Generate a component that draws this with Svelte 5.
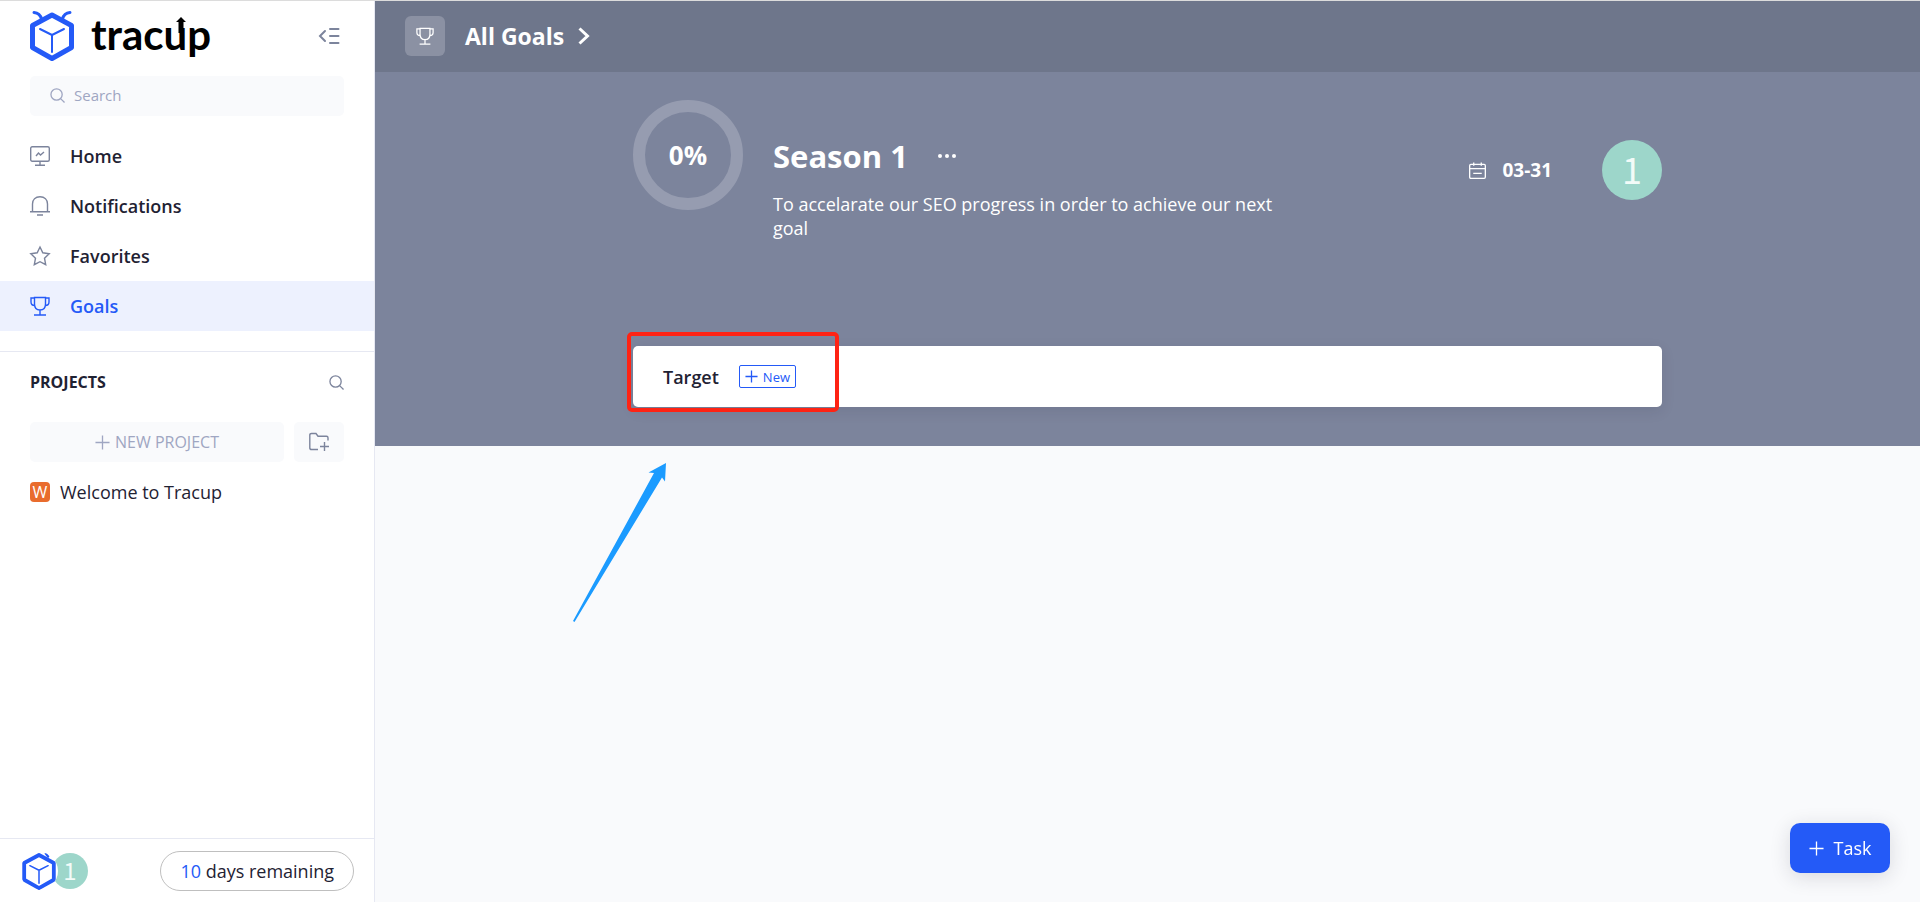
<script lang="ts">
	let keyword = '';

	const navItems = [
		{ id: 'home', label: 'Home' },
		{ id: 'notifications', label: 'Notifications' },
		{ id: 'favorites', label: 'Favorites' },
		{ id: 'goals', label: 'Goals' }
	];
	const activeItem = 'goals';

	const projects = [{ name: 'Welcome to Tracup', initial: 'W' }];

	const goal = {
		name: 'Season 1',
		progress: 0,
		description: 'To accelarate our SEO progress in order to achieve our next goal',
		due: '03-31'
	};
	const daysLeft = 10;
	const circumference = 2 * Math.PI * 49;
</script>

{#snippet cube()}
	<path class="shell" d="M22 4 L41.500 14.500 V36.500 L22 47.500 L2.500 36.500 V14.500 Z" />
	<path class="edge" d="M10 18 L22 24 L34 18 M22 24 V41" />
{/snippet}

{#snippet trophy()}
	<path d="M4.500 1.500 H15.500 V8 C15.500 12 13 14 10 14 C7 14 4.500 12 4.500 8 Z M4.500 2 H1 V6 C1 8.500 2.500 9.500 4.800 9.500 M15.500 2 H19 V6 C19 8.500 17.500 9.500 15.200 9.500 M10 14 V18.500 M4 19 H16" />
{/snippet}

{#snippet magnifier()}
	<svg class="icon small" viewBox="0 0 16 16" aria-hidden="true">
		<circle cx="7" cy="7" r="6" />
		<path d="M11.300 11.300 L15.500 15.500" />
	</svg>
{/snippet}

<div class="app">
	<aside class="sidebar">
		<div class="brand">
			<a class="logo" href="#home" aria-label="tracup">
				<svg class="cube" viewBox="0 0 44 50" aria-hidden="true">
					{@render cube()}
					<path class="antenna" d="M4 1.500 Q10 2 11.500 8 M40 1.500 Q34 2 32.500 8" />
				</svg>
				<span class="wordmark">
					tracup
					<svg class="up" viewBox="0 0 10 16" aria-hidden="true">
						<path d="M5 0 L10 5 H7.500 V16 H2.500 V5 H0 Z" />
					</svg>
				</span>
			</a>
			<button class="plain" aria-label="Collapse sidebar">
				<svg class="icon collapse" viewBox="0 0 20 16" aria-hidden="true">
					<path d="M6 3 L1 8 L6 13 M11 1 H19.500 M11 8 H19.500 M11 15 H19.500" />
				</svg>
			</button>
		</div>

		<label class="search">
			{@render magnifier()}
			<input type="text" placeholder="Search" aria-label="Search" bind:value={keyword} />
		</label>

		<nav>
			{#each navItems as item}
				<a href="#{item.id}" class:active={item.id === activeItem}>
					<svg class="icon" viewBox="0 0 20 20" aria-hidden="true">
						{#if item.id === 'home'}
							<rect x="0.700" y="0.700" width="18.600" height="14.600" rx="1.500" />
							<path d="M10 15.500 V19 M5 19.200 H15 M6 10 L8.500 7 L10.500 9 L14 6" />
						{:else if item.id === 'notifications'}
							<path d="M2.500 15.500 V8 C2.500 3.500 5.500 0.700 10 0.700 C14.500 0.700 17.500 3.500 17.500 8 V15.500 M0 15.800 H20 M7 19 H13" />
						{:else if item.id === 'favorites'}
							<path d="M10 1 L12.800 6.800 L19.200 7.700 L14.500 12.200 L15.700 18.700 L10 15.700 L4.300 18.700 L5.500 12.200 L0.800 7.700 L7.200 6.800 Z" />
						{:else}
							{@render trophy()}
						{/if}
					</svg>
					<span>{item.label}</span>
				</a>
			{/each}
		</nav>

		<section class="projects">
			<div class="projects-head">
				<h2>PROJECTS</h2>
				<button class="plain" aria-label="Search projects">{@render magnifier()}</button>
			</div>
			<div class="project-actions">
				<button class="new-project">
					<svg class="icon small" viewBox="0 0 16 16" aria-hidden="true">
						<path d="M8 0.500 V15.500 M0.500 8 H15.500" />
					</svg>
					NEW PROJECT
				</button>
				<button class="new-folder" aria-label="New folder">
					<svg class="icon" viewBox="0 0 20 20" aria-hidden="true">
						<path d="M9 17.500 H2.500 Q0.800 17.500 0.800 16 V3 Q0.800 1.500 2.500 1.500 H7 L9 4.200 H17.500 Q19 4.200 19 5.700 V8.500 M15.500 10 V19 M11 14.500 H20" />
					</svg>
				</button>
			</div>
			{#each projects as project}
				<a class="project" href="#project">
					<span class="badge" aria-hidden="true">{project.initial}</span>
					{project.name}
				</a>
			{/each}
		</section>

		<footer>
			<div class="members">
				<svg class="member-cube" viewBox="0 0 44 50" aria-hidden="true">
					{@render cube()}
					<path class="antenna" d="M31 2 L34 6" />
				</svg>
				<span class="avatar mini">1</span>
			</div>
			<button class="remaining"><span>{daysLeft}</span> days remaining</button>
		</footer>
	</aside>

	<main>
		<header>
			<span class="tile">
				<svg class="icon tile-icon" viewBox="0 0 20 20" aria-hidden="true">{@render trophy()}</svg>
			</span>
			<a href="#goals">
				All Goals
				<svg class="icon chevron" viewBox="0 0 12 18" aria-hidden="true">
					<path d="M1.500 1.500 L9.500 9 L1.500 16.500" />
				</svg>
			</a>
		</header>

		<section class="hero">
			<div class="content">
				<div class="summary">
					<div class="ring">
						<svg viewBox="0 0 110 110" aria-hidden="true">
							<circle class="track" cx="55" cy="55" r="49" />
							{#if goal.progress > 0}
								<circle class="done" cx="55" cy="55" r="49" stroke-dasharray="{(circumference * goal.progress) / 100} {circumference}" />
							{/if}
						</svg>
						<span>{goal.progress}%</span>
					</div>

					<div class="info">
						<div class="title">
							<h1>{goal.name}</h1>
							<button class="plain" aria-label="More">
								<svg class="dots" viewBox="0 0 18 4" aria-hidden="true">
									<circle cx="2" cy="2" r="2" />
									<circle cx="9" cy="2" r="2" />
									<circle cx="16" cy="2" r="2" />
								</svg>
							</button>
						</div>
						<p>{goal.description}</p>
					</div>

					<div class="meta">
						<span class="due">
							<svg class="icon calendar" viewBox="0 0 18 18" aria-hidden="true">
								<path d="M2 2.500 H16 Q17.300 2.500 17.300 4 V16 Q17.300 17.300 16 17.300 H2 Q0.700 17.300 0.700 16 V4 Q0.700 2.500 2 2.500 Z M0.700 7 H17.300 M5 0.500 V4 M13 0.500 V4 M4.500 12 H13.500" />
							</svg>
							{goal.due}
						</span>
						<span class="avatar">1</span>
					</div>
				</div>

				<div class="target">
					<h3>Target</h3>
					<button class="new-target">
						<svg class="icon" viewBox="0 0 14 14" aria-hidden="true">
							<path d="M7 0.500 V13.500 M0.500 7 H13.500" />
						</svg>
						New
					</button>
					<div class="marker"></div>
					<svg class="pointer" viewBox="0 0 94 160" aria-hidden="true">
						<path d="M93 0 L92 18.500 L89 14.500 L1.500 159 L0 158 L81 10 L75.500 9.500 Z" />
					</svg>
				</div>
			</div>
		</section>

		<button class="task">
			<svg class="icon small" viewBox="0 0 16 16" aria-hidden="true">
				<path d="M8 0.500 V15.500 M0.500 8 H15.500" />
			</svg>
			Task
		</button>
	</main>
</div>

<style>
	:global(body) {
		background: #f9fafc;
		color: #1f2233;
		font-family: "Open Sans", "Noto Sans", sans-serif;
		font-size: 18px;
		line-height: 24px;
	}

	.app,
	.app :global(*) {
		box-sizing: border-box;
	}

	.app {
		display: grid;
		grid-template-columns: 375px 1fr;
		min-height: 100vh;
		border-top: 1px solid #dcdcdc;
	}

	a {
		color: inherit;
		text-decoration: none;
	}

	button {
		border: none;
		padding: 0;
		background: none;
		color: inherit;
		font: inherit;
		cursor: pointer;
	}

	h1,
	h2,
	h3,
	p {
		margin: 0;
	}

	.plain {
		display: flex;
		align-items: center;
	}

	.icon {
		width: 20px;
		height: 20px;
		flex-shrink: 0;
		overflow: visible;
		fill: none;
		stroke: currentColor;
		stroke-width: 1.4;
	}

	.icon.small {
		width: 15px;
		height: 15px;
	}

	/* Sidebar */
	.sidebar {
		display: flex;
		flex-direction: column;
		background: #fff;
		border-right: 1px solid #e6e8f2;
	}

	.brand {
		display: flex;
		align-items: center;
		justify-content: space-between;
		height: 75px;
		padding: 0 35px 6px 30px;
		color: #7c849c;
	}

	.logo {
		display: flex;
		align-items: center;
		gap: 17px;
	}

	.cube {
		width: 44px;
		height: 50px;
	}

	.shell,
	.edge,
	.antenna {
		fill: none;
		stroke: #245af7;
		stroke-linecap: round;
		stroke-linejoin: round;
	}

	.shell {
		stroke-width: 5;
	}

	.edge {
		stroke-width: 2;
	}

	.antenna {
		stroke-width: 3;
	}

	.wordmark {
		position: relative;
		padding-bottom: 4px;
		color: #000;
		font-family: Lato, sans-serif;
		font-size: 42px;
		font-weight: 700;
		line-height: 48px;
	}

	.up {
		position: absolute;
		top: 7px;
		right: 25px;
		width: 10px;
		height: 16px;
	}

	.collapse {
		height: 16px;
		stroke-width: 2;
		stroke-linecap: round;
	}

	.search {
		display: flex;
		align-items: center;
		gap: 9px;
		height: 40px;
		margin: 0 30px 15px;
		padding: 0 20px 2px;
		border-radius: 5px;
		background: #f9fafc;
		color: #9fa6c2;
	}

	.search input {
		flex: 1;
		min-width: 0;
		padding: 0;
		border: none;
		outline: none;
		background: none;
		color: #1f2233;
		font: inherit;
		font-size: 15px;
	}

	.search input::placeholder {
		color: #9fa6c2;
		opacity: 1;
	}

	nav {
		padding-bottom: 20px;
		border-bottom: 1px solid #e6e8f2;
	}

	nav a {
		display: flex;
		align-items: center;
		gap: 20px;
		height: 50px;
		padding: 0 30px;
		font-weight: 600;
	}

	nav .icon {
		color: #7c849c;
	}

	nav a.active,
	nav a.active .icon {
		color: #245af7;
	}

	nav a.active {
		background: #edf1fe;
	}

	.projects {
		flex: 1;
		padding: 0 30px;
	}

	.projects-head {
		display: flex;
		align-items: center;
		justify-content: space-between;
		height: 60px;
	}

	.projects-head h2 {
		font-size: 16px;
		font-weight: 700;
	}

	.projects-head .plain {
		color: #7c849c;
	}

	.project-actions {
		display: flex;
		gap: 10px;
		height: 40px;
		margin: 10px 0;
	}

	.new-project,
	.new-folder {
		display: flex;
		align-items: center;
		justify-content: center;
		gap: 5px;
		border-radius: 5px;
		background: #f9fafc;
	}

	.new-project {
		flex: 1;
		color: #9fa6c2;
		font-size: 16px;
	}

	.new-folder {
		width: 50px;
		color: #7c849c;
	}

	.project {
		display: flex;
		align-items: center;
		gap: 10px;
		height: 40px;
	}

	.badge {
		width: 20px;
		height: 20px;
		border-radius: 4px;
		background: #e96c2d;
		color: #fff;
		font-size: 16px;
		line-height: 20px;
		text-align: center;
	}

	footer {
		display: flex;
		align-items: center;
		justify-content: space-between;
		height: 64px;
		padding: 0 20px;
		border-top: 1px solid #e6e8f2;
	}

	.members {
		display: flex;
		align-items: center;
	}

	.member-cube {
		z-index: 1;
		width: 38px;
		height: 38px;
		border-radius: 50%;
		background: #fff;
	}

	.avatar {
		width: 60px;
		height: 60px;
		border-radius: 50%;
		background: #9dd6ca;
		color: #f2fbf8;
		font-family: "Noto Sans CJK SC", sans-serif;
		font-size: 36px;
		line-height: 56px;
		text-align: center;
	}

	.avatar.mini {
		width: 36px;
		height: 36px;
		margin-left: -6px;
		font-size: 24px;
		line-height: 34px;
	}

	.remaining {
		height: 40px;
		padding: 0 19px;
		border: 1px solid #bfbfbf;
		border-radius: 20px;
	}

	.remaining span {
		color: #245af7;
	}

	/* Goal page */
	main {
		min-width: 0;
	}

	header {
		display: flex;
		align-items: center;
		gap: 20px;
		height: 71px;
		padding: 0 30px 2px;
		background: #6e768b;
		color: #fff;
	}

	header a {
		display: flex;
		align-items: center;
		gap: 14px;
		font-size: 23px;
		font-weight: 700;
	}

	.tile {
		display: flex;
		align-items: center;
		justify-content: center;
		width: 40px;
		height: 40px;
		border-radius: 6px;
		background: #8b91a3;
	}

	.tile-icon {
		width: 18px;
		height: 18px;
	}

	.chevron {
		width: 12px;
		height: 18px;
		stroke-width: 3;
	}

	.hero {
		padding: 28px 30px 39px;
		background: #7c849c;
		color: #fff;
	}

	.content {
		max-width: 1029px;
		margin: 0 auto;
	}

	.summary {
		display: flex;
		align-items: flex-start;
		gap: 30px;
		min-height: 246px;
	}

	.ring {
		display: grid;
		place-items: center;
		width: 110px;
		height: 110px;
		font-size: 26px;
		font-weight: 700;
	}

	.ring svg,
	.ring span {
		grid-area: 1 / 1;
	}

	.ring svg {
		width: 110px;
		height: 110px;
		fill: none;
	}

	.track,
	.done {
		stroke: #969cb0;
		stroke-width: 12;
	}

	.done {
		stroke: #fff;
	}

	.info {
		flex: 0 1 520px;
		padding-top: 36px;
	}

	.title {
		display: flex;
		align-items: center;
		gap: 30px;
	}

	.title h1 {
		font-size: 31px;
		font-weight: 700;
		line-height: 40px;
	}

	.dots {
		width: 18px;
		height: 4px;
		fill: #fff;
	}

	.info p {
		margin-top: 16px;
	}

	.meta {
		display: flex;
		align-items: center;
		gap: 50px;
		margin-left: auto;
		padding-top: 40px;
	}

	.due {
		display: flex;
		align-items: center;
		gap: 16px;
		font-size: 19px;
		font-weight: 700;
	}

	.calendar {
		width: 17px;
		height: 17px;
	}

	.target {
		position: relative;
		display: flex;
		align-items: center;
		gap: 20px;
		height: 61px;
		padding: 0 30px;
		border-radius: 5px;
		background: #fff;
		box-shadow: 0 4px 14px rgba(31, 34, 51, 0.1);
		color: #1f2233;
	}

	.target h3 {
		font-size: 18px;
		font-weight: 600;
	}

	.new-target {
		display: flex;
		align-items: center;
		gap: 5px;
		height: 23px;
		padding: 0 5px;
		border: 1px solid #245af7;
		border-radius: 2px;
		color: #245af7;
		font-size: 13px;
	}

	.new-target .icon {
		width: 13px;
		height: 13px;
	}

	/* Callout drawn over the card */
	.marker {
		position: absolute;
		top: -14px;
		left: -6px;
		width: 212px;
		height: 80px;
		border: 4px solid #fe2314;
		border-radius: 5px;
		pointer-events: none;
	}

	.pointer {
		position: absolute;
		top: 117px;
		left: -60px;
		width: 94px;
		height: 160px;
		fill: #1b9bff;
		pointer-events: none;
	}

	.task {
		position: fixed;
		right: 30px;
		bottom: 29px;
		display: flex;
		align-items: center;
		justify-content: center;
		gap: 10px;
		width: 100px;
		height: 50px;
		border-radius: 10px;
		background: #245af7;
		box-shadow: 0 4px 20px rgba(31, 34, 51, 0.15);
		color: #fff;
	}
</style>
